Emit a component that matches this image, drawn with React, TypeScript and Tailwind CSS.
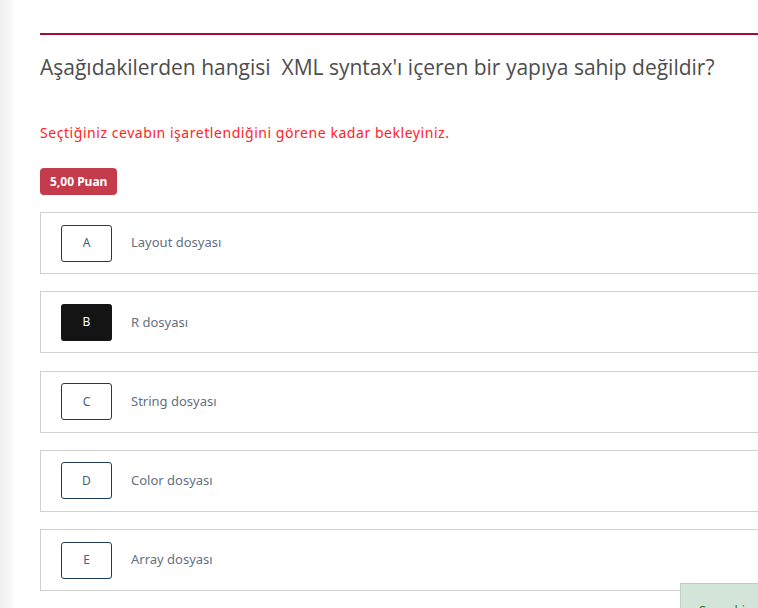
import React from 'react';

const OPTIONS = [
  { key: 'A', text: 'Layout dosyası', selected: false },
  { key: 'B', text: 'R dosyası', selected: true },
  { key: 'C', text: 'String dosyası', selected: false },
  { key: 'D', text: 'Color dosyası', selected: false },
  { key: 'E', text: 'Array dosyası', selected: false },
];

const App: React.FC = () => {
  return (
    <div className="relative h-[608px] w-[758px] overflow-hidden bg-white flex">
      <div className="w-[12px] shrink-0 bg-gradient-to-r from-[#f0f0f0] to-[#f8f8f8]" />
      <div className="pl-[28px] pt-[33px] w-[780px] shrink-0">
        <div className="h-[2px] bg-[#a50d33]" />
        <h1
          className="mt-[18px] text-[21px] leading-[28px] text-[#4d4d4d]"
          style={{ fontFamily: '"Open Sans", sans-serif' }}
        >
          Aşağıdakilerden hangisi&nbsp; XML syntax'ı içeren bir yapıya sahip değildir?
        </h1>
        <p
          className="mt-[42px] text-[14px] tracking-[0.55px] leading-[20px] text-[#ff2323]"
          style={{ fontFamily: '"Noto Sans", sans-serif' }}
        >
          Seçtiğiniz cevabın işaretlendiğini görene kadar bekleyiniz.
        </p>
        <div className="mt-[25px] flex">
          <span
            className="rounded-[4px] bg-[#c43b4c] px-[10px] h-[27px] flex items-center text-[12px] font-bold text-white"
            style={{ fontFamily: '"Noto Sans", sans-serif' }}
          >
            5,00 Puan
          </span>
        </div>
        <div className="mt-[17px] flex flex-col gap-[17.3px]">
          {OPTIONS.map((o) => (
            <div
              key={o.key}
              className="h-[62px] border border-[#d0d0d0] flex items-center pl-[20px]"
              style={{ fontFamily: '"Noto Sans", sans-serif' }}
            >
              <div
                className={
                  o.selected
                    ? 'w-[51px] h-[37px] rounded-[3px] bg-[#141414] text-white flex items-center justify-center text-[12px]'
                    : 'w-[51px] h-[37px] rounded-[3px] border border-[#1d3b57] text-[#46617b] flex items-center justify-center text-[12px]'
                }
              >
                {o.key}
              </div>
              <span className="ml-[19px] text-[13px] text-[#637080]">{o.text}</span>
            </div>
          ))}
        </div>
      </div>
      <div className="absolute left-[680px] top-[583px] w-[90px] h-[40px] bg-[#d3e4d8] border border-[#b8d3bf] pl-[18px] pt-[17px] text-[13px] leading-[18px] text-[#2e7d3a]" style={{ fontFamily: '"Noto Sans", sans-serif' }}>
        Sonraki
      </div>
    </div>
  );
};

export default App;
